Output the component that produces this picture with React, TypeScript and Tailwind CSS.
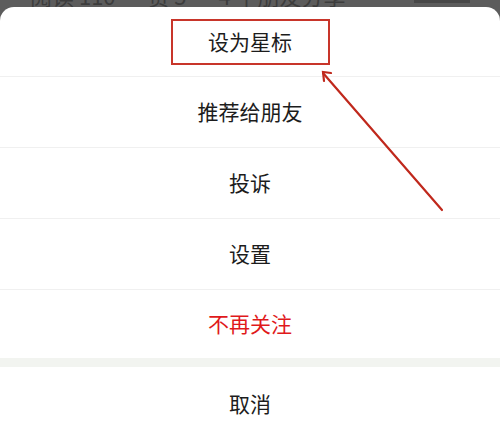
const font = { fontFamily: '"Noto Sans CJK SC", "Noto Sans", sans-serif' };

const rows = [
  { label: "推荐给朋友" },
  { label: "投诉" },
  { label: "设置" },
];

export default function App() {
  return (
    <div className="relative h-[439px] w-[500px] overflow-hidden bg-[#5c5c5c]" style={font}>
      {/* page behind the sheet, only its lower edge shows */}
      <div className="flex h-[7px] items-end justify-between overflow-hidden px-[30px]">
        <span className="mb-[1px] whitespace-nowrap text-[22px] leading-none text-[#3c3c3c]">阅读 110 · 赞 5 · 4 个朋友分享</span>
        <span className="mb-[4px] h-[3px] w-[56px] bg-[#474747]" />
      </div>

      <div className="relative z-10 flex flex-col rounded-t-[14px] bg-white">
        <div className="flex h-[70px] items-center justify-center border-b border-[#f0f0f0]">
          <div className="flex h-[46px] w-[159px] items-center justify-center border-2 border-[#c8352a] text-[21px] text-[#1c1c1c]">
            设为星标
          </div>
        </div>
        {rows.map((r) => (
          <div
            key={r.label}
            className="flex h-[71px] items-center justify-center border-b border-[#f0f0f0] text-[21px] text-[#1c1c1c]"
          >
            {r.label}
          </div>
        ))}
        <div className="flex h-[68px] items-center justify-center text-[21px] text-[#e0191b]">不再关注</div>
        <div className="h-[9px] bg-[#f2f4f0]" />
        <div className="flex h-[73px] items-center justify-center text-[21px] text-[#1c1c1c]">取消</div>
      </div>

      {/* annotation arrow */}
      <svg className="pointer-events-none absolute left-0 top-0 z-20" width="500" height="439" viewBox="0 0 500 439">
        <g stroke="#c0281c" strokeWidth="2.2" strokeLinecap="round" fill="none">
          <line x1="442" y1="210" x2="323" y2="73" />
          <polyline points="331,73 323,72 324,81" />
        </g>
      </svg>
    </div>
  );
}
